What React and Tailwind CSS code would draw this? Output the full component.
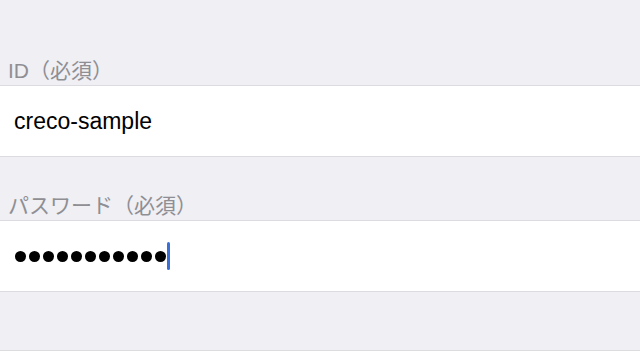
import React from 'react';

const font = { fontFamily: '"Liberation Sans", "Noto Sans CJK JP", sans-serif' };

const Label = ({ children, className }) => (
    <div className={`flex items-end px-2 pb-[4px] text-[21px] leading-none text-[#8e8e93] ${className}`}>
        {children}
    </div>
);

const App = () => {
    const dots = Array.from({ length: 11 });
    return (
        <div className="h-[356px] w-[640px] bg-[#efeff4] overflow-hidden" style={font}>
            <Label className="h-[85px]">ID（必須）</Label>
            <div className="h-[72px] bg-white border-y border-[#dcdce0] flex items-center px-[14px]">
                <span className="text-[23px] leading-none text-black">creco-sample</span>
            </div>
            <Label className="h-[63px]">パスワード（必須）</Label>
            <div className="h-[72px] bg-white border-y border-[#dcdce0] flex items-center pl-[15px]">
                <div className="flex items-center gap-[3px]">
                    {dots.map((_, i) => (
                        <div key={i} className="w-[11px] h-[11px] rounded-full bg-black"></div>
                    ))}
                </div>
                <div className="ml-[1px] w-[3px] h-[28px] bg-[#3b6fd8] rounded-sm"></div>
            </div>
            <div className="h-[59px] border-b border-[#dcdce0]"></div>
            <div className="h-[5px] bg-white"></div>
        </div>
    );
};

export default App;
